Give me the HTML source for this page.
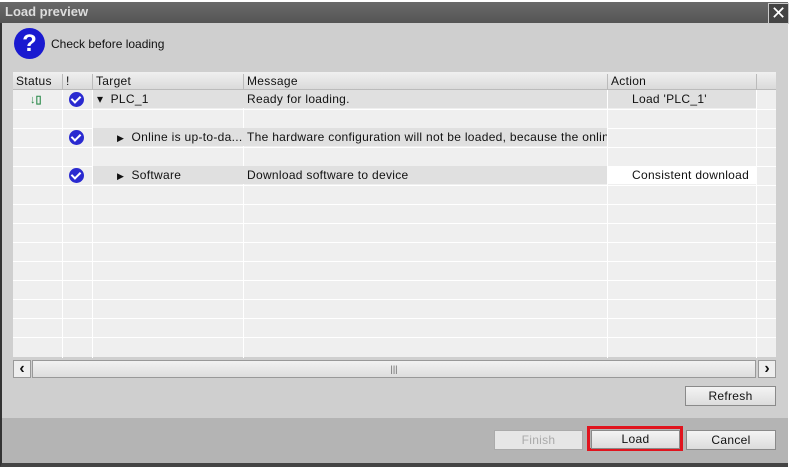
<!DOCTYPE html>
<html><head><style>
body{margin:0;width:791px;height:469px;overflow:hidden;background:#fff;font-family:"Liberation Sans",sans-serif;font-size:12px;color:#111;position:relative}
.a{position:absolute}
#win{left:0;top:2px;width:788px;height:465px;background:#cfcfcf;border-left:2px solid #333;border-bottom:4px solid #444;box-sizing:border-box}
#title{left:0;top:2px;width:788px;height:21px;background:linear-gradient(#6a6a6a,#555);}
.btn{position:absolute;height:18px;border:1px solid #8a8a8a;background:linear-gradient(#f4f4f4,#dcdcdc);text-align:center;line-height:18px;font-size:12px;box-sizing:content-box;letter-spacing:0.3px}
.cell{position:absolute;height:18px;line-height:18px;white-space:nowrap;overflow:hidden;letter-spacing:0.3px}
.chk{position:absolute;width:15px;height:15px;border-radius:50%;background:#2a2ad0;}
.chk:after{content:"";position:absolute;left:4px;top:2px;width:4px;height:7px;border:solid #fff;border-width:0 2px 2px 0;transform:rotate(45deg)}
</style></head><body>
<div id="win" class="a"></div>
<div id="title" class="a"></div>
<div class="a" style="left:5px;top:4px;color:#ddd;font-weight:bold;font-size:13px">Load preview</div>
<div class="a" style="left:768px;top:3px;width:19px;height:19px;border:1px solid #ccc;background:#444;color:#fff;font-size:18px;line-height:19px;text-align:center">✕</div>
<div class="a" style="left:14px;top:28px;width:31px;height:31px;border-radius:50%;background:#1a1ad0;color:#fff;font-weight:bold;font-size:24px;text-align:center;line-height:31px">?</div>
<div class="a" style="left:51px;top:37px;font-size:12px">Check before loading</div>
<div class="a" style="left:13px;top:72px;width:763px;height:285px;background:#efefef"></div>
<div class="a" style="left:13px;top:72px;width:763px;height:17px;background:linear-gradient(#f0f0f0,#dadada);border-bottom:1px solid #bbb"></div>
<svg class="a" style="left:13px;top:72px" width="763" height="286">
<g stroke="#fff" stroke-width="1">
<line x1="49.5" y1="18" x2="49.5" y2="286"/><line x1="79.5" y1="18" x2="79.5" y2="286"/><line x1="230.5" y1="18" x2="230.5" y2="286"/><line x1="594.5" y1="18" x2="594.5" y2="286"/><line x1="743.5" y1="18" x2="743.5" y2="286"/>
</g>
<g stroke="#fff"><line x1="0" x2="763" y1="37.5" y2="37.5"/><line x1="0" x2="763" y1="56.5" y2="56.5"/><line x1="0" x2="763" y1="75.5" y2="75.5"/><line x1="0" x2="763" y1="94.5" y2="94.5"/><line x1="0" x2="763" y1="113.5" y2="113.5"/><line x1="0" x2="763" y1="132.5" y2="132.5"/><line x1="0" x2="763" y1="151.5" y2="151.5"/><line x1="0" x2="763" y1="170.5" y2="170.5"/><line x1="0" x2="763" y1="189.5" y2="189.5"/><line x1="0" x2="763" y1="208.5" y2="208.5"/><line x1="0" x2="763" y1="227.5" y2="227.5"/><line x1="0" x2="763" y1="246.5" y2="246.5"/><line x1="0" x2="763" y1="265.5" y2="265.5"/></g>
<g stroke="#bbb"><line x1="49.5" y1="2" x2="49.5" y2="17"/><line x1="79.5" y1="2" x2="79.5" y2="17"/><line x1="230.5" y1="2" x2="230.5" y2="17"/><line x1="594.5" y1="2" x2="594.5" y2="17"/><line x1="743.5" y1="2" x2="743.5" y2="17"/></g>
</svg>
<div class="a" style="left:93px;top:90px;width:514px;height:18px;background:#e0e0e0"></div>
<div class="a" style="left:608px;top:90px;width:148px;height:18px;background:#e0e0e0"></div>
<div class="a" style="left:93px;top:128px;width:514px;height:18px;background:#e0e0e0"></div>
<div class="a" style="left:93px;top:166px;width:514px;height:18px;background:#e0e0e0"></div>
<div class="a" style="left:608px;top:166px;width:148px;height:18px;background:#fff"></div>
<div class="cell" style="left:16px;top:72px">Status</div>
<div class="cell" style="left:66px;top:72px">!</div>
<div class="cell" style="left:96px;top:72px">Target</div>
<div class="cell" style="left:247px;top:72px">Message</div>
<div class="cell" style="left:611px;top:72px">Action</div>
<div class="a" style="left:30px;top:93px;color:#2a8a4a;font-size:11px;font-weight:bold">↓▯</div>
<div class="chk" style="left:69px;top:92px"></div>
<div class="chk" style="left:69px;top:130px"></div>
<div class="chk" style="left:69px;top:168px"></div>
<div class="cell" style="left:97px;top:90px">▾&nbsp;&nbsp;PLC_1</div>
<div class="cell" style="left:247px;top:90px">Ready for loading.</div>
<div class="cell" style="left:632px;top:90px">Load 'PLC_1'</div>
<div class="cell" style="left:117px;top:128px;width:125px"><span style="font-size:9px">▶</span>&nbsp;&nbsp;Online is up-to-da...</div>
<div class="cell" style="left:247px;top:128px;width:360px">The hardware configuration will not be loaded, because the onlin..</div>
<div class="cell" style="left:117px;top:166px"><span style="font-size:9px">▶</span>&nbsp;&nbsp;Software</div>
<div class="cell" style="left:247px;top:166px">Download software to device</div>
<div class="cell" style="left:632px;top:166px">Consistent download</div>
<div class="a" style="left:13px;top:360px;width:16px;height:16px;border:1px solid #999;background:#eee;text-align:center;line-height:15px;font-weight:bold;font-size:16px">‹</div>
<div class="a" style="left:32px;top:360px;width:722px;height:16px;border:1px solid #999;background:linear-gradient(#f2f2f2,#ddd);text-align:center;line-height:16px;font-size:9px;color:#666">|||</div>
<div class="a" style="left:758px;top:360px;width:16px;height:16px;border:1px solid #999;background:#eee;text-align:center;line-height:15px;font-weight:bold;font-size:16px">›</div>
<div class="btn" style="left:685px;top:386px;width:89px">Refresh</div>
<div class="a" style="left:2px;top:418px;width:786px;height:45px;background:#b4b4b4"></div>
<div class="btn" style="left:494px;top:430px;width:87px;color:#aaa;background:#e6e6e6;border-color:#aaa">Finish</div>
<div class="a" style="left:587px;top:426px;width:96px;height:25px;border:3px solid #e0141e;box-sizing:border-box"></div>
<div class="btn" style="left:591px;top:430px;width:87px;height:17px;line-height:17px">Load</div>
<div class="btn" style="left:686px;top:430px;width:88px">Cancel</div>
</body></html>
